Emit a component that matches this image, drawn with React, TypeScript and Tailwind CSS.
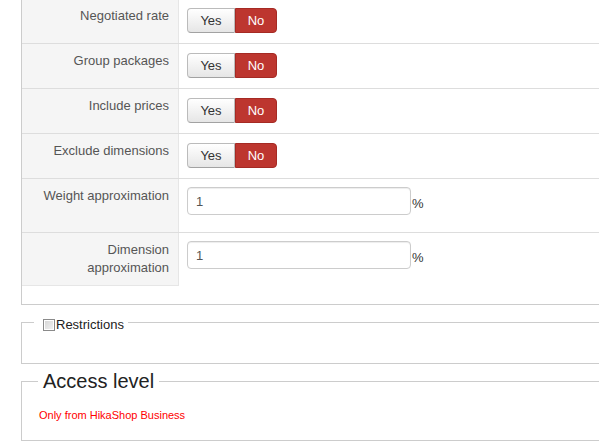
import React from "react";

function Toggle() {
  return (
    <div className="flex h-[25px]">
      <button className="w-[48px] h-[25px] border border-[#bbbbbb] border-b-[#a2a2a2] rounded-l-[4px] bg-gradient-to-b from-white to-[#e6e6e6] text-[13px] leading-[18px] text-[#333333]">
        Yes
      </button>
      <button className="w-[42px] h-[25px] border border-[#a52a24] rounded-r-[4px] bg-[#bd362f] text-[13px] leading-[18px] text-white">
        No
      </button>
    </div>
  );
}

function Row({ label, children, last, valueCls }: { label: React.ReactNode; children: React.ReactNode; last?: boolean; valueCls: string }) {
  return (
    <div className={last ? "flex" : "flex border-b border-[#dddddd]"}>
      <div
        className={
          "w-[157px] shrink-0 bg-[#f5f5f5] border-r border-[#e6e6e6] text-right pr-[9px] pt-[8px] pb-[8px] text-[13px] leading-[18px] text-[#555555]" +
          (last ? " border-b" : "")
        }
      >
        {label}
      </div>
      <div className={"pl-[8px] " + valueCls}>{children}</div>
    </div>
  );
}

function NumInput() {
  return (
    <div className="flex items-center">
      <input
        defaultValue="1"
        className="w-[224px] h-[28px] border border-[#cccccc] rounded-[4px] px-[8px] text-[13px] text-[#555555] shadow-[inset_0_1px_1px_rgba(0,0,0,0.075)] outline-none"
      />
      <span className="text-[13px] leading-[18px] text-[#333333] ml-[1px] mt-[5px]">%</span>
    </div>
  );
}

export default function App() {
  return (
    <div className="w-[599px] h-[443px] overflow-hidden bg-white font-['Liberation_Sans',Arial,sans-serif]">
      <div className="ml-[21px] w-[620px] -mt-[1px] border-l border-b border-[#cccccc] pb-[18px]">
        <Row label="Negotiated rate" valueCls="pt-[9px] pb-[10px]">
          <Toggle />
        </Row>
        <Row label="Group packages" valueCls="pt-[9px] pb-[10px]">
          <Toggle />
        </Row>
        <Row label="Include prices" valueCls="pt-[9px] pb-[10px]">
          <Toggle />
        </Row>
        <Row label="Exclude dimensions" valueCls="pt-[9px] pb-[10px]">
          <Toggle />
        </Row>
        <Row label="Weight approximation" valueCls="pt-[8px] pb-[17px]">
          <NumInput />
        </Row>
        <Row
          label={
            <>
              Dimension
              <br />
              approximation
            </>
          }
          valueCls="pt-[8px] pb-[8px]"
          last
        >
          <NumInput />
        </Row>
      </div>

      <fieldset className="ml-[21px] w-[620px] mt-[5px] border border-[#cccccc]">
        <legend className="ml-[12px] px-[4px] pt-[6px] flex items-center text-[13px] leading-[18px] text-[#222222]">
          <span className="ml-[5px] mr-[1px] w-[12px] h-[12px] border border-[#8a8a8a] bg-gradient-to-br from-[#d4d4d4] to-[#f4f4f4] shadow-[inset_0_0_0_1px_#ffffff]" />
          <span>Restrictions</span>
        </legend>
        <div className="h-[29px]" />
      </fieldset>

      <fieldset className="ml-[21px] w-[620px] mt-[5px] border border-[#cccccc]">
        <legend className="ml-[16px] px-[5px] text-[20px] leading-[24px] text-[#222222]">
          Access level
        </legend>
        <div className="pt-[15px] pl-[17px] pb-[18px] text-[11px] leading-[14px] text-[#ff0000]">
          Only from HikaShop Business
        </div>
      </fieldset>
    </div>
  );
}
